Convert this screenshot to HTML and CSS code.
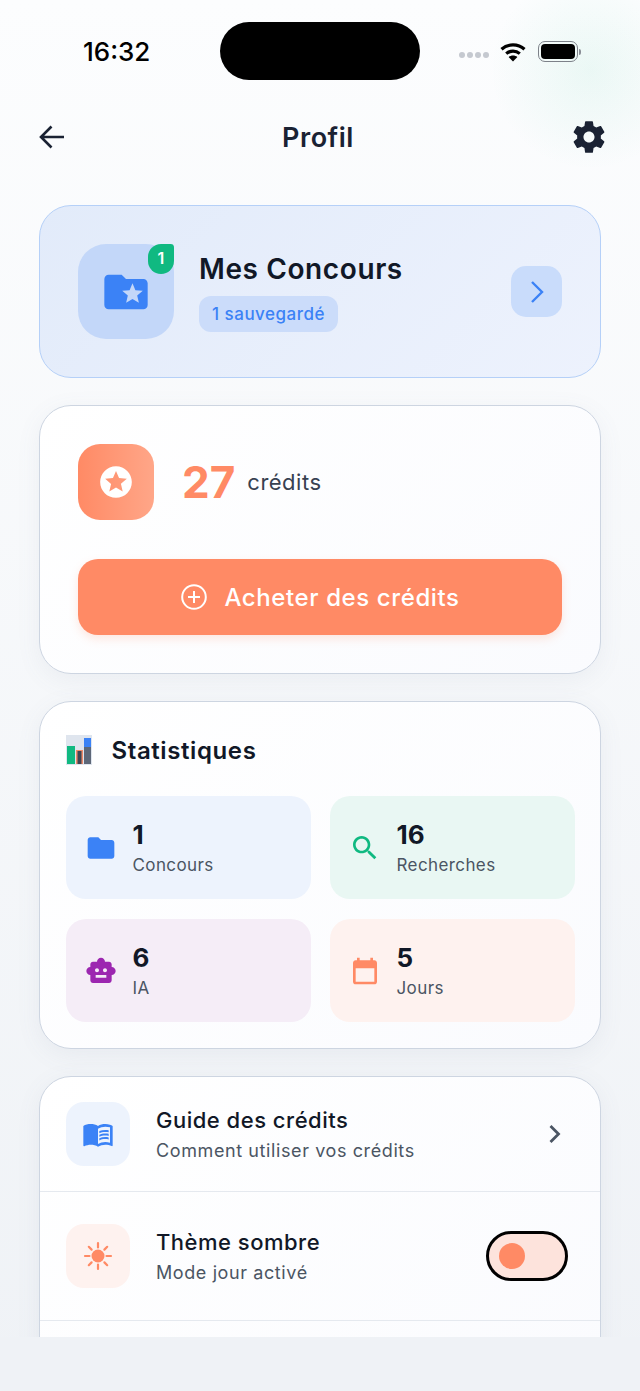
FILE: index.html
```html
<!DOCTYPE html>
<html lang="fr">

<head>
  <meta charset="UTF-8">
  <meta name="viewport" content="width=device-width, initial-scale=1.0">
  <title>Profil</title>
  <link rel="stylesheet" href="styles.css">
</head>

<body>
  <div class="screen">
    <div class="status-bar">
      <span class="time">16:32</span>
      <div class="island"></div>
      <div class="status-icons">
        <div class="signal"><i></i><i></i><i></i><i></i></div>
        <svg class="wifi" width="28" height="20" viewBox="0 0 28 20">
          <path d="M2.5 7.2C9 1.4 19 1.4 25.5 7.2" fill="none" stroke="#000" stroke-width="3.2" />
          <path d="M7.2 11.6c4-3.4 9.6-3.4 13.6 0" fill="none" stroke="#000" stroke-width="3.2" />
          <path d="M14 19.6l-4.4-4.6c2.6-2 6.2-2 8.8 0z" fill="#000" />
        </svg>
        <div class="battery">
          <div class="battery-level"></div>
        </div>
        <div class="battery-cap"></div>
      </div>
    </div>

    <header class="header">
      <svg class="back" width="28" height="26" viewBox="0 0 28 26">
        <path d="M26 13H3M13.5 2.5L3 13l10.5 10.5" fill="none" stroke="#1a2233" stroke-width="2.6" />
      </svg>
      <h1>Profil</h1>
      <svg class="gear" width="38" height="38" viewBox="0 0 24 24">
        <path fill="#1a2233" d="M19.43 12.98c.04-.32.07-.64.07-.98s-.03-.66-.07-.98l2.11-1.65c.19-.15.24-.42.12-.64l-2-3.46c-.12-.22-.39-.3-.61-.22l-2.49 1c-.52-.4-1.08-.73-1.69-.98l-.38-2.65C14.46 2.18 14.25 2 14 2h-4c-.25 0-.46.18-.49.42l-.38 2.65c-.61.25-1.17.59-1.69.98l-2.49-1c-.23-.09-.49 0-.61.22l-2 3.46c-.13.22-.07.49.12.64l2.11 1.65c-.04.32-.07.65-.07.98s.03.66.07.98l-2.11 1.65c-.19.15-.24.42-.12.64l2 3.46c.12.22.39.3.61.22l2.49-1c.52.4 1.08.73 1.69.98l.38 2.65c.03.24.24.42.49.42h4c.25 0 .46-.18.49-.42l.38-2.65c.61-.25 1.17-.59 1.69-.98l2.49 1c.23.09.49 0 .61-.22l2-3.46c.12-.22.07-.49-.12-.64l-2.11-1.65zM12 15.5c-1.93 0-3.5-1.57-3.5-3.5s1.57-3.5 3.5-3.5 3.5 1.57 3.5 3.5-1.57 3.5-3.5 3.5z" />
      </svg>
    </header>

    <main class="content">
      <section class="card contests">
        <div class="contests-icon">
          <svg width="52" height="52" viewBox="0 0 24 24">
            <path fill="#3b82f6" d="M20 6h-8l-2-2H4c-1.1 0-1.99.9-1.99 2L2 18c0 1.1.9 2 2 2h16c1.1 0 2-.9 2-2V8c0-1.1-.9-2-2-2zm-2.06 11L15 15.28 12.06 17l.78-3.33-2.59-2.24 3.41-.29L15 8l1.34 3.14 3.41.29-2.59 2.24.78 3.33z" />
          </svg>
          <span class="count-badge">1</span>
        </div>
        <div class="contests-text">
          <h2>Mes Concours</h2>
          <span class="saved-pill">1 sauvegardé</span>
        </div>
        <div class="contests-arrow">
          <svg width="16" height="24" viewBox="0 0 16 24">
            <path d="M3 2l10 10L3 22" fill="none" stroke="#3b82f6" stroke-width="2.4" />
          </svg>
        </div>
      </section>

      <section class="card credits">
        <div class="credits-row">
          <div class="credits-icon">
            <svg width="38" height="38" viewBox="0 0 24 24">
              <path fill="#fff" d="M11.99 2C6.47 2 2 6.48 2 12s4.47 10 9.99 10C17.52 22 22 17.52 22 12S17.52 2 11.99 2zm4.24 16L12 15.45 7.77 18l1.12-4.81-3.73-3.23 4.92-.42L12 5l1.92 4.53 4.92.42-3.73 3.23L16.23 18z" />
            </svg>
          </div>
          <span class="credits-value">27</span>
          <span class="credits-label">crédits</span>
        </div>
        <button class="buy-button">
          <svg width="28" height="28" viewBox="0 0 28 28">
            <circle cx="14" cy="14" r="11.8" fill="none" stroke="#fff" stroke-width="2" />
            <path d="M14 8v12M8 14h12" fill="none" stroke="#fff" stroke-width="2" />
          </svg>
          Acheter des crédits
        </button>
      </section>

      <section class="card stats">
        <div class="stats-title">
          <svg class="chart-emoji" width="26" height="30" viewBox="0 0 26 30">
            <rect width="26" height="30" fill="#dfe5ee" />
            <rect x="1" y="11" width="8" height="18" fill="#10b981" />
            <rect x="10" y="15" width="7" height="14" fill="#f08a6a" />
            <rect x="11.5" y="16" width="4" height="13" fill="#3f4654" />
            <rect x="18" y="3" width="7" height="26" fill="#5d6778" />
            <rect x="18" y="3" width="7" height="9" fill="#3b82f6" />
          </svg>
          <h3>Statistiques</h3>
        </div>
        <div class="stats-grid">
          <div class="stat stat-blue">
            <svg width="32" height="32" viewBox="0 0 24 24">
              <path fill="#3b82f6" d="M10 4H4c-1.1 0-1.99.9-1.99 2L2 18c0 1.1.9 2 2 2h16c1.1 0 2-.9 2-2V8c0-1.1-.9-2-2-2h-8l-2-2z" />
            </svg>
            <div class="stat-text"><strong>1</strong><span>Concours</span></div>
          </div>
          <div class="stat stat-green">
            <svg width="32" height="32" viewBox="0 0 24 24">
              <path fill="#10b981" d="M15.5 14h-.79l-.28-.27C15.41 12.59 16 11.11 16 9.5 16 5.91 13.09 3 9.5 3S3 5.91 3 9.5 5.91 16 9.5 16c1.61 0 3.09-.59 4.23-1.57l.27.28v.79l5 4.99L20.49 19l-4.99-5zm-6 0C7.01 14 5 11.99 5 9.5S7.01 5 9.5 5 14 7.01 14 9.5 11.99 14 9.5 14z" />
            </svg>
            <div class="stat-text"><strong>16</strong><span>Recherches</span></div>
          </div>
          <div class="stat stat-purple">
            <svg width="32" height="32" viewBox="0 0 24 24">
              <path fill="#9c27b0" d="M20 9V7c0-1.1-.9-2-2-2h-3c0-1.66-1.34-3-3-3S9 3.34 9 5H6c-1.1 0-2 .9-2 2v2c-1.66 0-3 1.34-3 3s1.34 3 3 3v4c0 1.1.9 2 2 2h12c1.1 0 2-.9 2-2v-4c1.66 0 3-1.34 3-3s-1.34-3-3-3zM7.5 11.5c0-.83.67-1.5 1.5-1.5s1.5.67 1.5 1.5S9.83 13 9 13s-1.5-.67-1.5-1.5zM16 17H8v-2h8v2zm-1-4c-.83 0-1.5-.67-1.5-1.5S14.17 10 15 10s1.5.67 1.5 1.5S15.83 13 15 13z" />
            </svg>
            <div class="stat-text"><strong>6</strong><span>IA</span></div>
          </div>
          <div class="stat stat-orange">
            <svg width="32" height="32" viewBox="0 0 24 24">
              <path fill="#ff8a65" d="M19 4h-1V2h-2v2H8V2H6v2H5c-1.11 0-1.99.9-1.99 2L3 20c0 1.1.89 2 2 2h14c1.1 0 2-.9 2-2V6c0-1.1-.9-2-2-2zm0 16H5V10h14v10z" />
            </svg>
            <div class="stat-text"><strong>5</strong><span>Jours</span></div>
          </div>
        </div>
      </section>

      <section class="card menu">
        <div class="menu-row">
          <div class="menu-icon menu-icon-blue">
            <svg width="32" height="32" viewBox="0 0 24 24">
              <path fill="#3b82f6" d="M21 5c-1.11-.35-2.33-.5-3.5-.5-1.95 0-4.05.4-5.5 1.5-1.45-1.1-3.55-1.5-5.5-1.5S2.45 4.9 1 6v14.65c0 .25.25.5.5.5.1 0 .15-.05.25-.05C3.1 20.45 5.05 20 6.5 20c1.95 0 4.05.4 5.5 1.5 1.35-.85 3.8-1.5 5.5-1.5 1.65 0 3.35.3 4.75 1.05.1.05.15.05.25.05.25 0 .5-.25.5-.5V6c-.6-.45-1.25-.75-2-1zm0 13.5c-1.1-.35-2.3-.5-3.5-.5-1.7 0-4.15.65-5.5 1.5V8c1.35-.85 3.8-1.5 5.5-1.5 1.2 0 2.4.15 3.5.5v11.5z" />
              <path fill="#3b82f6" d="M17.5 10.5c.88 0 1.73.09 2.5.26V9.24c-.79-.15-1.64-.24-2.5-.24-1.7 0-3.24.29-4.5.83v1.66c1.13-.64 2.7-.99 4.5-.99zM13 12.49v1.66c1.13-.64 2.7-.99 4.5-.99.88 0 1.73.09 2.5.26V11.9c-.79-.15-1.64-.24-2.5-.24-1.7 0-3.24.3-4.5.83zM17.5 14.33c-1.7 0-3.24.29-4.5.83v1.66c1.13-.64 2.7-.99 4.5-.99.88 0 1.73.09 2.5.26v-1.52c-.79-.16-1.64-.24-2.5-.24z" />
            </svg>
          </div>
          <div class="menu-text">
            <span class="menu-title">Guide des crédits</span>
            <span class="menu-sub">Comment utiliser vos crédits</span>
          </div>
          <svg class="menu-chevron" width="14" height="20" viewBox="0 0 14 20">
            <path d="M2.5 2l8 8-8 8" fill="none" stroke="#4b5563" stroke-width="2.8" />
          </svg>
        </div>
        <div class="menu-row menu-row-tall">
          <div class="menu-icon menu-icon-orange">
            <svg width="32" height="32" viewBox="0 0 32 32">
              <circle cx="16" cy="16" r="6.5" fill="#ff8a65" />
              <path d="M16 3v4.5M16 24.500V29M3 16h4.500M24.500 16H29M6.800 6.800l2.800 2.800M22.400 22.400l2.800 2.800M6.800 25.200l2.800-2.800M22.400 9.600l2.800-2.800" fill="none" stroke="#ff8a65" stroke-width="2.200" stroke-linecap="round" />
            </svg>
          </div>
          <div class="menu-text">
            <span class="menu-title">Thème sombre</span>
            <span class="menu-sub">Mode jour activé</span>
          </div>
          <div class="toggle">
            <div class="toggle-knob"></div>
          </div>
        </div>
        <div class="menu-row menu-row-tall"></div>
      </section>
    </main>
  </div>
  <div class="home-band"></div>
</body>

</html>
```

FILE: styles.css
```css
* {
  margin: 0;
  padding: 0;
  box-sizing: border-box;
}

body {
  width: 640px;
  height: 1391px;
  overflow: hidden;
  font-family: Inter, "Noto Sans", sans-serif;
  color: #1a2233;
  background:
    radial-gradient(circle at 590px 70px, rgba(16, 185, 129, 0.07), transparent 100px),
    linear-gradient(180deg, #fcfdfe 0%, #eff2f6 100%);
}

.screen {
  height: 1337px;
  overflow: hidden;
}

.home-band {
  height: 54px;
  background-color: #eff2f6;
}

/* status bar */
.status-bar {
  height: 80px;
  padding-top: 22px;
  display: flex;
  justify-content: center;
  position: relative;
}

.time {
  position: absolute;
  left: 83px;
  top: 36px;
  font-size: 26px;
  font-weight: 500;
  line-height: 32px;
  color: #000000;
}

.island {
  width: 200px;
  height: 58px;
  background-color: #000000;
  border-radius: 29px;
}

.status-icons {
  position: absolute;
  left: 459px;
  top: 41px;
  display: flex;
  align-items: center;
}

.signal {
  display: flex;
  gap: 2px;
  margin-top: 6px;
}

.signal i {
  width: 6px;
  height: 6px;
  border-radius: 50%;
  background-color: #c5c9d0;
}

.wifi {
  margin-left: 10px;
}

.battery {
  width: 40px;
  height: 21px;
  margin-left: 11px;
  padding: 2px;
  border: 1.5px solid #7d8189;
  border-radius: 7px;
}

.battery-level {
  height: 100%;
  background-color: #000000;
  border-radius: 4px;
}

.battery-cap {
  width: 2px;
  height: 6px;
  margin-left: 1px;
  background-color: #8a8e96;
  border-radius: 0 2px 2px 0;
}

/* header */
.header {
  height: 58px;
  margin-top: 28px;
  padding: 0 32px 0 38px;
  display: flex;
  align-items: center;
  justify-content: space-between;
}

.header h1 {
  font-size: 27px;
  font-weight: 600;
  letter-spacing: 0.5px;
}

/* cards */
.content {
  padding: 39px 39px 0;
  display: flex;
  flex-direction: column;
  gap: 27px;
}

.card {
  background: linear-gradient(135deg, #ffffff, #fafbfe);
  border: 1.5px solid #cdd5e1;
  border-radius: 32px;
  box-shadow: 0 6px 24px rgba(100, 116, 139, 0.08);
}

.contests {
  background: linear-gradient(135deg, #e2ebfa, #edf2fd);
  border-color: #b5d0f8;
  padding: 38px;
  display: flex;
  align-items: center;
  box-shadow: none;
}

.contests-icon {
  position: relative;
  width: 96px;
  height: 95px;
  background-color: #c3d7f9;
  border-radius: 28px;
  display: flex;
  align-items: center;
  justify-content: center;
}

.count-badge {
  position: absolute;
  top: 0;
  right: 0;
  width: 26px;
  height: 30px;
  background-color: #10b981;
  color: #ffffff;
  font-size: 16px;
  font-weight: 600;
  line-height: 28px;
  text-align: center;
  border-radius: 15px 4px 15px 15px;
}

.contests-text {
  flex: 1;
  margin-left: 25px;
}

.contests-text h2 {
  font-size: 28px;
  font-weight: 600;
  line-height: 34px;
  letter-spacing: 0.6px;
  color: #111827;
}

.saved-pill {
  display: inline-block;
  margin-top: 10px;
  padding: 0 13px;
  height: 36px;
  line-height: 36px;
  background-color: #cbdcfa;
  border-radius: 12px;
  color: #3b82f6;
  font-size: 17px;
  font-weight: 500;
  letter-spacing: 0.5px;
}

.contests-arrow {
  width: 51px;
  height: 51px;
  background-color: #c9dcfb;
  border-radius: 15px;
  display: flex;
  align-items: center;
  justify-content: center;
}

.credits {
  padding: 38px;
}

.credits-row {
  display: flex;
  align-items: center;
}

.credits-icon {
  width: 76px;
  height: 76px;
  background: linear-gradient(90deg, #ff8a65, #ffa688);
  border-radius: 22px;
  display: flex;
  align-items: center;
  justify-content: center;
}

.credits-value {
  margin-left: 28px;
  font-size: 44px;
  font-weight: 700;
  color: #ff8a65;
}

.credits-label {
  margin-left: 12px;
  font-size: 22px;
  letter-spacing: 0.5px;
  color: #374151;
}

.buy-button {
  width: 100%;
  height: 76px;
  margin-top: 39px;
  border: none;
  border-radius: 20px;
  background-color: #ff8a65;
  box-shadow: 0 4px 10px rgba(255, 138, 101, 0.2);
  color: #ffffff;
  font-family: inherit;
  font-size: 24px;
  font-weight: 500;
  letter-spacing: 0.6px;
  display: flex;
  align-items: center;
  justify-content: center;
  gap: 16px;
}

.stats {
  padding: 26px 25.5px;
}

.stats-title {
  height: 44px;
  margin-bottom: 24px;
  display: flex;
  align-items: center;
  gap: 20px;
}

.stats-title h3 {
  font-size: 24px;
  font-weight: 600;
  letter-spacing: 0.6px;
  color: #111827;
}

.stats-grid {
  display: grid;
  grid-template-columns: 1fr 1fr;
  column-gap: 19px;
  row-gap: 20px;
}

.stat {
  height: 103px;
  padding-left: 19px;
  border-radius: 20px;
  display: flex;
  align-items: center;
  gap: 16px;
}

.stat-blue {
  background-color: #edf3fd;
}

.stat-green {
  background-color: #e9f7f3;
}

.stat-purple {
  background-color: #f5edf7;
}

.stat-orange {
  background-color: #fef2ef;
}

.stat-text {
  display: flex;
  flex-direction: column;
}

.stat-text strong {
  font-size: 26px;
  font-weight: 700;
  line-height: 32px;
  color: #111827;
}

.stat-text span {
  margin-top: 3px;
  font-size: 17px;
  line-height: 22px;
  letter-spacing: 0.4px;
  color: #4b5563;
}

.menu {
  padding: 0;
}

.menu-row {
  padding: 25px 26px;
  display: flex;
  align-items: center;
  border-bottom: 1.5px solid #e5e9ef;
}

.menu-row-tall {
  padding-top: 32px;
  padding-bottom: 32px;
}

.menu-icon {
  width: 64px;
  height: 64px;
  border-radius: 18px;
  display: flex;
  align-items: center;
  justify-content: center;
}

.menu-icon-blue {
  background-color: #edf3fd;
}

.menu-icon-orange {
  background-color: #fef2ef;
}

.menu-text {
  flex: 1;
  margin-left: 26px;
  display: flex;
  flex-direction: column;
}

.menu-title {
  font-size: 22px;
  font-weight: 500;
  line-height: 28px;
  letter-spacing: 0.5px;
  color: #111827;
}

.menu-sub {
  margin-top: 5px;
  font-size: 18px;
  line-height: 24px;
  letter-spacing: 0.6px;
  color: #4b5563;
}

.menu-chevron {
  margin-right: 12px;
}

.toggle {
  width: 82px;
  height: 50px;
  margin-right: 6px;
  padding-left: 10px;
  background-color: #fde3dc;
  border: 3px solid #000000;
  border-radius: 25px;
  display: flex;
  align-items: center;
}

.toggle-knob {
  width: 26px;
  height: 26px;
  background-color: #ff8a65;
  border-radius: 50%;
}
```
